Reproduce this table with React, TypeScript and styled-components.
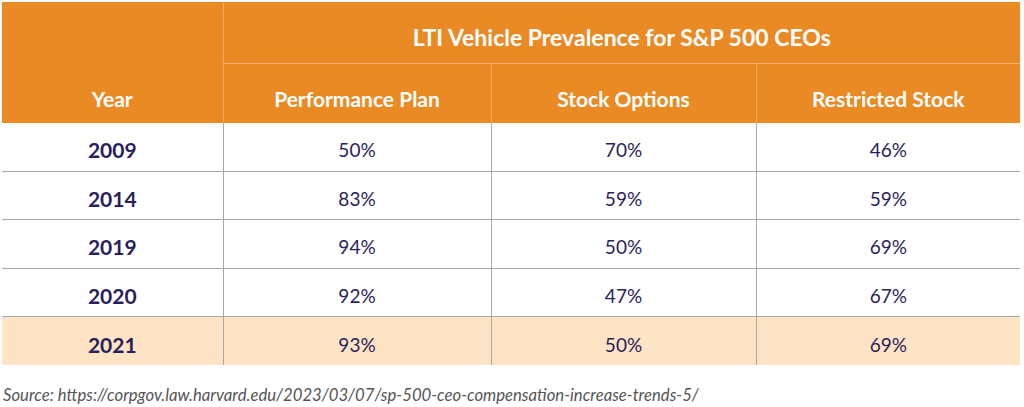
import React from "react";
import styled, { createGlobalStyle } from "styled-components";

const GlobalStyle = createGlobalStyle`
  html, body {
    margin: 0;
    padding: 0;
    background: #ffffff;
  }
`;

const rows = [
  { year: "2009", performance: "50%", options: "70%", restricted: "46%" },
  { year: "2014", performance: "83%", options: "59%", restricted: "59%" },
  { year: "2019", performance: "94%", options: "50%", restricted: "69%" },
  { year: "2020", performance: "92%", options: "47%", restricted: "67%" },
  { year: "2021", performance: "93%", options: "50%", restricted: "69%", highlight: true },
];

const App = () => (
  <Page>
    <GlobalStyle />
    <Table>
      <colgroup>
        <col style={{ width: 221 }} />
        <col style={{ width: 268 }} />
        <col style={{ width: 265 }} />
        <col style={{ width: 264 }} />
      </colgroup>
      <thead>
        <TopRow>
          <YearHead rowSpan={2}>Year</YearHead>
          <TitleCell colSpan={3}>LTI Vehicle Prevalence for S&amp;P 500 CEOs</TitleCell>
        </TopRow>
        <SubRow>
          <HeadCell>Performance Plan</HeadCell>
          <HeadCell>Stock Options</HeadCell>
          <HeadCell $last>Restricted Stock</HeadCell>
        </SubRow>
      </thead>
      <tbody>
        {rows.map((row, i) => (
          <BodyRow key={row.year} $highlight={row.highlight} $last={i === rows.length - 1}>
            <YearCell>{row.year}</YearCell>
            <ValueCell>{row.performance}</ValueCell>
            <ValueCell>{row.options}</ValueCell>
            <ValueCell $last>{row.restricted}</ValueCell>
          </BodyRow>
        ))}
      </tbody>
    </Table>
    <Source>
      Source: https://corpgov.law.harvard.edu/2023/03/07/sp-500-ceo-compensation-increase-trends-5/
    </Source>
  </Page>
);

const Page = styled.div`
  padding: 2px 4px 0 2px;
  font-family: Lato, "Open Sans", sans-serif;
`;

const Table = styled.table`
  width: 1018px;
  border-collapse: collapse;
  table-layout: fixed;
`;

const TopRow = styled.tr`
  height: 61px;
`;

const SubRow = styled.tr`
  height: 60px;
`;

const headBase = `
  background: #e98a24;
  color: #ffffff;
  font-weight: 700;
  text-align: center;
  padding: 0;
`;

const YearHead = styled.th`
  ${headBase}
  font-size: 21px;
  vertical-align: bottom;
  padding-bottom: 12px;
  border-right: 1px solid #f0ae66;
`;

const TitleCell = styled.th`
  ${headBase}
  font-size: 23px;
  padding-top: 10px;
  border-bottom: 1px solid #f0ae66;
`;

const HeadCell = styled.th<{ $last?: boolean }>`
  ${headBase}
  font-size: 21px;
  padding-top: 10px;
  border-right: ${(p) => (p.$last ? "none" : "1px solid #f0ae66")};
`;

const BodyRow = styled.tr<{ $highlight?: boolean; $last?: boolean }>`
  height: 48.4px;
  background: ${(p) => (p.$highlight ? "#fde4c4" : "#ffffff")};
  border-bottom: ${(p) => (p.$last ? "none" : "1px solid #a8a8a8")};
`;

const YearCell = styled.td`
  padding: 6px 0 0;
  text-align: center;
  font-size: 21px;
  font-weight: 700;
  color: #2b1e5c;
  border-right: 1px solid #a8a8a8;
`;

const ValueCell = styled.td<{ $last?: boolean }>`
  padding: 6px 0 0;
  text-align: center;
  font-size: 19px;
  font-weight: 400;
  color: #2b1e5c;
  border-right: ${(p) => (p.$last ? "none" : "1px solid #a8a8a8")};
`;

const Source = styled.div`
  margin-top: 20px;
  padding-left: 1px;
  font-size: 16.7px;
  font-style: italic;
  color: #555555;
`;

export default App;
